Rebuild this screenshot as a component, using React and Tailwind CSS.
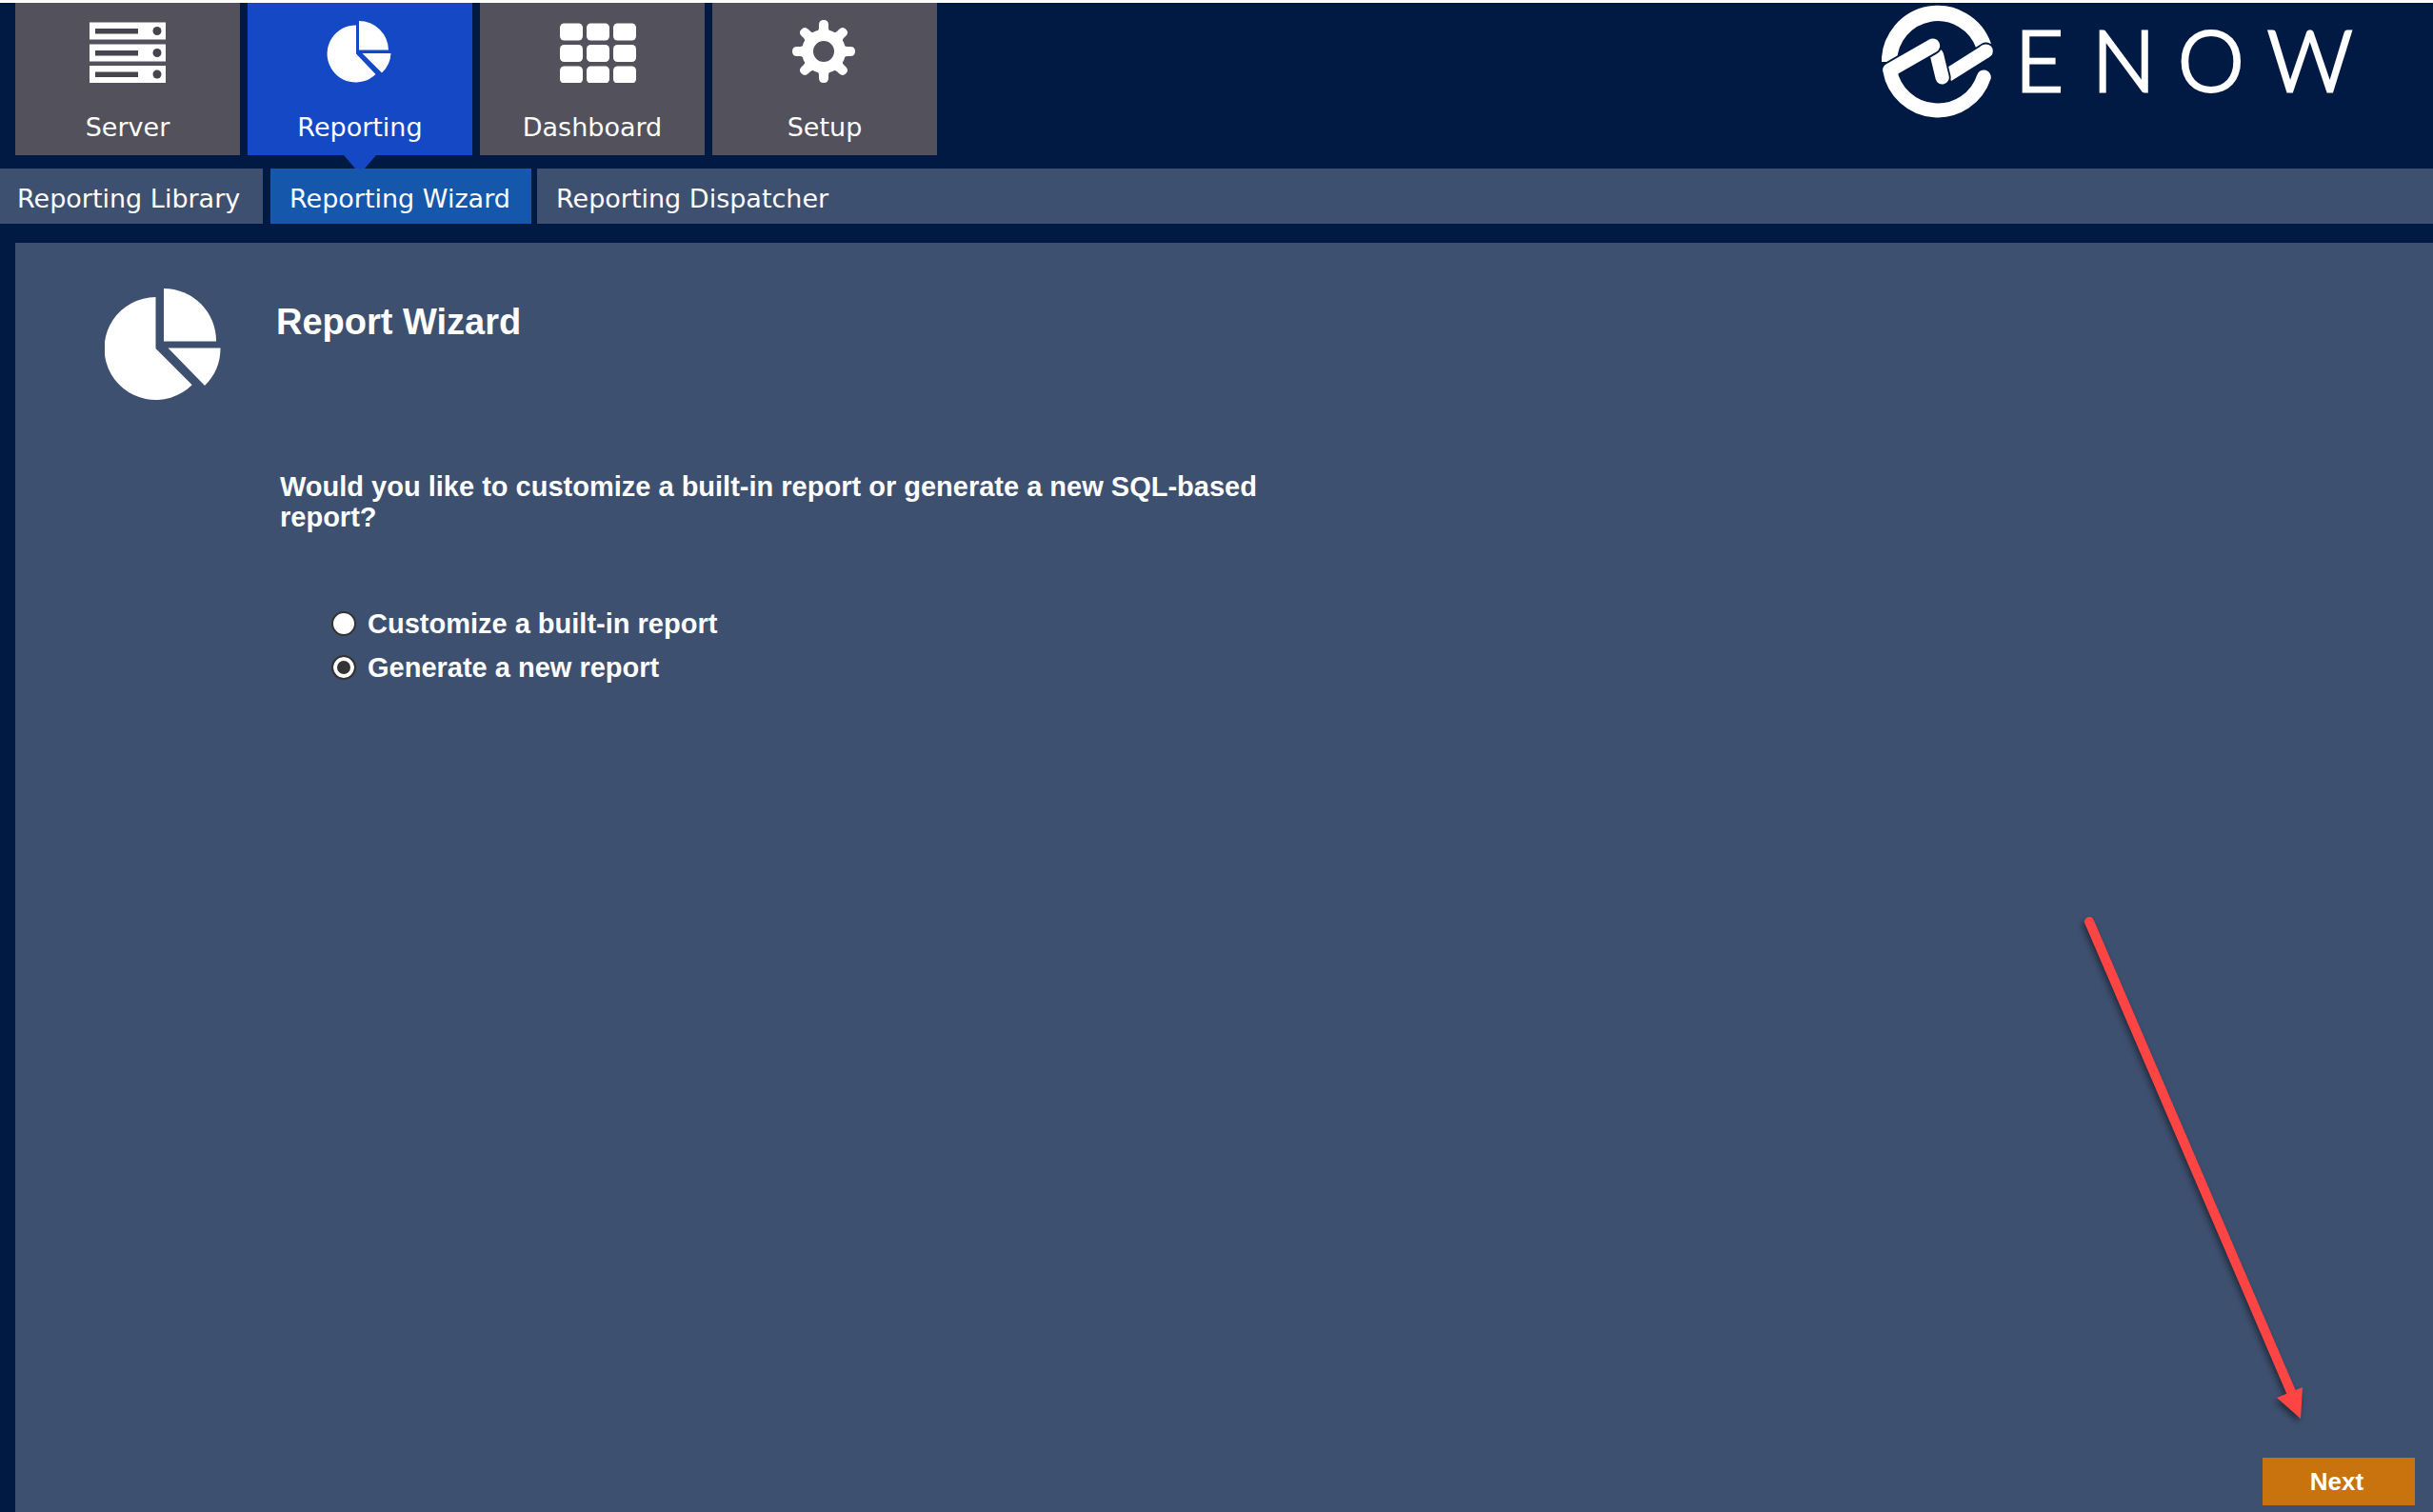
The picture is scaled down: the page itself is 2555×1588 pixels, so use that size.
import React, { useState } from "react";

const ServerIcon = () => (
    <svg viewBox="0 0 96 66" className="w-24 h-[66px]" fill="#ffffff" aria-hidden="true">
        {[2.5, 25.5, 48].map((y) => (
            <g key={y}>
                <rect x="8" y={y} width="80" height="18" />
                <rect x="14" y={y + 6.5} width="45" height="5.5" fill="#45444f" />
                <circle cx="79" cy={y + 9} r="4.5" fill="#45444f" />
            </g>
        ))}
    </svg>
);

const PieIcon = () => (
    <svg viewBox="-14 -1 96 66" className="w-24 h-[66px]" fill="#ffffff" aria-hidden="true">
        <path d="M30 34.5V4.5A30 30 0 1 0 50.5 56Z" />
        <path d="M33 30.5V0A31 31 0 0 1 64 30.5Z" />
        <path d="M36.5 34H66.5A30 30 0 0 1 57 54.5Z" />
    </svg>
);

const GridIcon = () => (
    <svg viewBox="0 0 96 66" className="w-24 h-[66px]" fill="#ffffff" aria-hidden="true">
        {[3.5, 26, 48.5].map((y) =>
            [14, 42, 70].map((x) => (
                <rect key={`${x}-${y}`} x={x} y={y} width="24" height="18" rx="4.5" />
            ))
        )}
    </svg>
);

const GearIcon = () => (
    <svg viewBox="0 0 96 66" className="w-24 h-[66px]" fill="none" stroke="#ffffff" aria-hidden="true">
        <circle cx="47" cy="33" r="17" strokeWidth="12" />
        {[0, 45, 90, 135, 180, 225, 270, 315].map((deg) => (
            <path
                key={deg}
                d="M38.5 13Q42 11.5 42 8V5Q42 0 47 0Q52 0 52 5V8Q52 11.5 55.5 13Z"
                fill="#ffffff"
                stroke="none"
                transform={`rotate(${deg} 47 33)`}
            />
        ))}
    </svg>
);

const Logo = () => (
    <svg viewBox="0 0 504 124" className="w-[504px] h-[124px]" role="img" aria-label="ENOW">
        <g transform="scale(0.3333)" fill="none" stroke="#ffffff" strokeWidth="49">
            <path d="M24 186A153 153 0 0 1 321.7 136.2" />
            <path d="M208 228L329 152" stroke="#001a44" strokeWidth="55" strokeLinecap="round" />
            <path d="M208 228L329 152" strokeWidth="43" />
            <path d="M328 152L329 152" strokeWidth="43" strokeLinecap="round" />
            <path d="M174 165L191 235" stroke="#001a44" strokeWidth="54" strokeLinecap="round" />
            <path d="M174 165L191 235" strokeWidth="43" strokeLinecap="round" />
            <path d="M161 135L27 212" stroke="#001a44" strokeWidth="57" strokeLinecap="round" />
            <path
                d="M161 135L26 212A153 153 0 0 0 322 234"
                strokeWidth="45"
                strokeLinecap="round"
                strokeLinejoin="round"
            />
        </g>
        <text
            x="140 221 311 405"
            y="93"
            fontSize="88"
            fill="#ffffff"
            stroke="#ffffff"
            strokeWidth="3"
            className="font-['Lato',sans-serif] font-light"
        >
            ENOW
        </text>
    </svg>
);

const tabs = [
    { label: "Server", icon: <ServerIcon /> },
    { label: "Reporting", icon: <PieIcon />, active: true },
    { label: "Dashboard", icon: <GridIcon /> },
    { label: "Setup", icon: <GearIcon /> },
];

const options = [
    { id: "customize", label: "Customize a built-in report" },
    { id: "generate", label: "Generate a new report" },
];

export default function App() {
    const [choice, setChoice] = useState("generate");

    return (
        <div className="min-h-screen flex flex-col bg-[#001a44] border-t-3 border-white text-white font-['DejaVu_Sans',sans-serif]">
            {/* --- Header --- */}
            <header className="flex justify-between pl-4 pr-[75px]">
                <nav className="flex gap-2 pb-3.5">
                    {tabs.map((tab) => (
                        <a
                            key={tab.label}
                            href="#"
                            className={`relative w-[236px] h-40 pt-[18px] flex flex-col items-center gap-[29px] text-[27px] leading-9 ${
                                tab.active ? "bg-[#1448c4]" : "bg-[#52515c]"
                            }`}
                        >
                            {tab.icon}
                            {tab.label}
                            {tab.active && (
                                <svg viewBox="0 0 34 14" className="absolute top-full w-[34px] h-3.5" aria-hidden="true">
                                    <path d="M0 0H34L22 14H12Z" fill="#1448c4" />
                                </svg>
                            )}
                        </a>
                    ))}
                </nav>
                <Logo />
            </header>

            {/* --- Sub menu --- */}
            <nav className="flex text-[27px] leading-9">
                <a href="#" className="bg-[#3e5070] min-w-[276px] pl-[18px] pt-3.5 pb-2">Reporting Library</a>
                <a href="#" className="bg-[#1457ab] min-w-[274px] pl-5 pt-3.5 pb-2 ml-2 mr-1.5">Reporting Wizard</a>
                <div className="bg-[#3e5070] flex-1 flex">
                    <a href="#" className="px-5 pt-3.5 pb-2">Reporting Dispatcher</a>
                </div>
            </nav>

            {/* --- Wizard --- */}
            <main className="relative flex-1 flex flex-col justify-between ml-4 mt-5 bg-[#3e5070] font-['Liberation_Sans',sans-serif] font-bold">
                <div className="flex gap-[58px] pl-[94px] pt-12">
                    <svg viewBox="0 0 122 118" className="w-[122px] h-[118px] shrink-0" fill="#ffffff" aria-hidden="true">
                        <path d="M53.5 63V9A54 54 0 1 0 91.7 101.2Z" />
                        <path d="M62 55.5V0A55 55 0 0 1 117 55.5Z" />
                        <path d="M66.5 62.5H121.5A55 55 0 0 1 105 102Z" />
                    </svg>
                    <div className="pt-[13px]">
                        <h1 className="text-[38px] leading-[44px]">Report Wizard</h1>
                        <fieldset className="mt-[135px] pl-1 max-w-[1100px] text-[29px]">
                            <legend className="leading-8">
                                Would you like to customize a built-in report or generate a new SQL-based report?
                            </legend>
                            <div className="flex flex-col gap-2.5 pt-[78px] pl-[54px] leading-9">
                                {options.map((opt) => (
                                    <label key={opt.id} htmlFor={opt.id} className="flex items-center gap-3">
                                        <input
                                            type="radio"
                                            id={opt.id}
                                            name="report"
                                            checked={choice === opt.id}
                                            onChange={() => setChoice(opt.id)}
                                            className="appearance-none w-[26px] h-[26px] rounded-full bg-white border-2 border-[#333333] checked:bg-[#333333] checked:shadow-[inset_0_0_0_4px_#ffffff]"
                                        />
                                        {opt.label}
                                    </label>
                                ))}
                            </div>
                        </fieldset>
                    </div>
                </div>
                <div className="flex justify-end pr-[19px] pb-[7px]">
                    <button type="button" className="w-40 h-[50px] pr-1 bg-[#c8730d] text-[26px] leading-8 font-bold">
                        Next
                    </button>
                </div>

                {/* Pointer to the Next button */}
                <svg
                    viewBox="0 0 250 550"
                    className="absolute right-[125px] bottom-[88px] w-[250px] h-[550px] pointer-events-none drop-shadow-[-2px_4px_3px_rgba(0,0,0,0.45)]"
                    aria-hidden="true"
                >
                    <path d="M14 18L226 512" stroke="#ff4444" strokeWidth="10" strokeLinecap="round" />
                    <path d="M236 540L211 518L238 507Z" fill="#ff4444" />
                </svg>
            </main>
        </div>
    );
}
